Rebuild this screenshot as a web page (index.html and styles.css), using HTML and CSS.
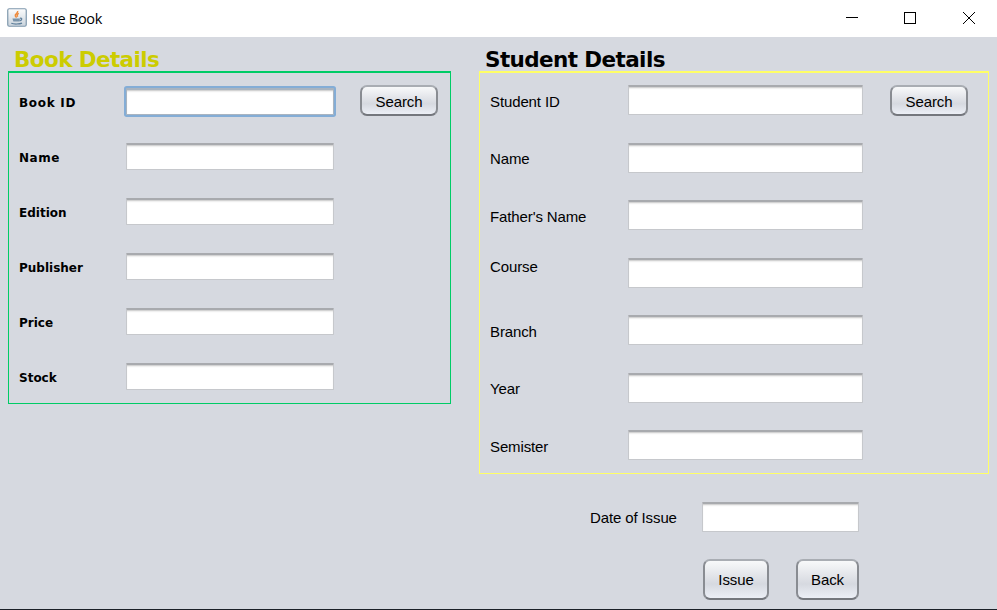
FILE: index.html
```html
<!DOCTYPE html>
<html lang="en">

<head>
    <meta charset="UTF-8">
    <meta name="viewport" content="width=device-width, initial-scale=1.0">
    <title>Issue Book</title>
    <link rel="stylesheet" href="styles.css">
</head>

<body>
    <header class="title-bar">
        <svg class="java-icon" width="20" height="20" viewBox="0 0 20 20">
            <defs>
                <linearGradient id="tile" x1="0" y1="0" x2="0" y2="1">
                    <stop offset="0" stop-color="#fdfdfd" />
                    <stop offset="1" stop-color="#c9d3dc" />
                </linearGradient>
            </defs>
            <rect x="0.75" y="0.75" width="18.5" height="17.5" rx="1.5" fill="url(#tile)" stroke="#7f98ad" stroke-width="1.2" />
            <path d="M10.600 3c1 2-3.400 3-2.200 5l1.200 1.600M11.800 5.400c-2 1-2 1.800-1 3.200" fill="none" stroke="#ee8a3c" stroke-width="1.500" />
            <path d="M5.500 10.500h7.500l-.6 3H6.300z" fill="#7893aa" />
            <path d="M13 10.300c2.500-.6 2.200 1.800-.4 2.600M4.300 15.300c2 1 8.500 1 10.700-.2" fill="none" stroke="#5e7f9b" stroke-width="1.200" />
        </svg>
        <span class="title">Issue Book</span>
        <svg class="window-buttons" width="130" height="14" viewBox="0 0 130 14" shape-rendering="crispEdges">
            <path d="M0 6.500h12" stroke="#000" />
            <rect x="58.500" y="1.500" width="11" height="11" fill="none" stroke="#000" />
            <path d="M117 1l12 12M129 1l-12 12" stroke="#000" shape-rendering="auto" />
        </svg>
    </header>

    <main class="content">
        <section class="book-section">
            <h2 class="section-title book-title">Book Details</h2>
            <form class="panel book-panel">
                <div class="row">
                    <label class="wide" for="bookId">Book ID</label>
                    <input class="focused" type="text" id="bookId">
                    <button type="button">Search</button>
                </div>
                <div class="row">
                    <label class="spaced" for="bookName">Name</label>
                    <input type="text" id="bookName">
                </div>
                <div class="row">
                    <label for="edition">Edition</label>
                    <input type="text" id="edition">
                </div>
                <div class="row">
                    <label for="publisher">Publisher</label>
                    <input type="text" id="publisher">
                </div>
                <div class="row">
                    <label for="price">Price</label>
                    <input type="text" id="price">
                </div>
                <div class="row">
                    <label for="stock">Stock</label>
                    <input type="text" id="stock">
                </div>
            </form>
        </section>

        <section class="student-section">
            <h2 class="section-title">Student Details</h2>
            <form class="panel student-panel">
                <div class="row">
                    <label for="studentId">Student ID</label>
                    <input type="text" id="studentId">
                    <button type="button">Search</button>
                </div>
                <div class="row">
                    <label for="studentName">Name</label>
                    <input type="text" id="studentName">
                </div>
                <div class="row">
                    <label for="fatherName">Father's Name</label>
                    <input type="text" id="fatherName">
                </div>
                <div class="row">
                    <label class="raised" for="course">Course</label>
                    <input type="text" id="course">
                </div>
                <div class="row">
                    <label for="branch">Branch</label>
                    <input type="text" id="branch">
                </div>
                <div class="row">
                    <label for="year">Year</label>
                    <input type="text" id="year">
                </div>
                <div class="row">
                    <label for="semister">Semister</label>
                    <input type="text" id="semister">
                </div>
            </form>
            <div class="issue-date">
                <label for="issueDate">Date of Issue</label>
                <input type="text" id="issueDate">
            </div>
            <div class="actions">
                <button class="btn-issue" type="button">Issue</button>
                <button class="btn-back" type="button">Back</button>
            </div>
        </section>
    </main>
</body>

</html>
```
FILE: styles.css
```css
* {
    box-sizing: border-box;
}

body {
    margin: 0;
    height: 610px;
    overflow: hidden;
    display: flex;
    flex-direction: column;
    background-color: #d6d9e0;
    border-bottom: 1px solid #1b2028;
    color: #000;
    font-family: "Liberation Sans", Arial, sans-serif;
    font-size: 15px;
}

.title-bar {
    display: flex;
    align-items: center;
    flex: none;
    height: 37px;
    padding: 0 21px 0 7px;
    background-color: #fff;
}

.java-icon {
    margin-top: -1px;
}

.title {
    margin-left: 5px;
    font-family: "Open Sans", "Noto Sans", sans-serif;
    font-size: 14.5px;
    letter-spacing: -0.3px;
}

.window-buttons {
    margin-left: auto;
    margin-top: -1px;
}

.content {
    display: flex;
    gap: 28px;
    padding: 8px 8px 0;
}

.book-section {
    width: 443px;
}

.student-section {
    width: 510px;
}

.section-title {
    margin: 0;
    padding-left: 6px;
    height: 26px;
    line-height: 29px;
    font-family: "DejaVu Sans", Verdana, sans-serif;
    font-size: 21.5px;
    font-weight: bold;
    letter-spacing: -0.6px;
}

.book-title {
    color: #cccc00;
}

.panel {
    border: 1px solid;
    border-top-width: 2px;
}

.row {
    display: flex;
    align-items: center;
}

.book-panel {
    height: 333px;
    padding: 1px 0 0 10px;
    border-color: #00cc66;
}

.book-panel .row {
    height: 55px;
}

.book-panel label {
    width: 107px;
    padding-top: 2px;
    font-family: "DejaVu Sans", Verdana, sans-serif;
    font-size: 12px;
    font-weight: bold;
}

.book-panel label.wide {
    letter-spacing: 0.7px;
}

.book-panel label.spaced {
    letter-spacing: 0.5px;
}

.book-panel input {
    width: 208px;
    height: 27px;
}

.student-panel {
    height: 403px;
    padding: 0 0 0 10px;
    border-color: #ffff66;
}

.student-panel .row {
    height: 57.5px;
    position: relative;
    top: -1.5px;
}

.student-panel label,
.issue-date label {
    letter-spacing: -0.12px;
}

.student-panel label {
    width: 138px;
    padding-top: 2px;
}

.student-panel label.raised {
    padding-bottom: 15px;
}

.student-panel input {
    width: 235px;
    height: 30px;
}

input {
    padding: 0 4px;
    border: 1px solid #c6c8cc;
    border-top: 2px solid #a8aaae;
    border-radius: 1px;
    background-color: #fff;
    box-shadow: inset 0 2px 2px -1px #c4c4c4;
    font: inherit;
    outline: none;
}

input.focused {
    border-color: #a9b4c0;
    box-shadow: 0 0 0 2px #84add6, inset 0 2px 2px -1px #c4c4c4;
}

button {
    padding: 0;
    border: 2px solid #898c92;
    border-top-color: #a9adb3;
    border-bottom-color: #74777d;
    border-radius: 7px;
    background: linear-gradient(#f8f9fa 0%, #e2e4e9 40%, #d6d9e0 62%, #eceff6 100%);
    color: #000;
    font-family: inherit;
    font-size: 15px;
    letter-spacing: -0.1px;
}

.row button {
    width: 78px;
    height: 31px;
    margin-left: 26px;
    padding-top: 1px;
}

.book-panel button {
    margin-top: -2px;
}

.student-panel .row button {
    margin-top: 1px;
    margin-left: 27px;
}

.issue-date {
    display: flex;
    align-items: center;
    margin: 28px 0 0 111px;
}

.issue-date label {
    width: 112px;
}

.issue-date input {
    width: 157px;
    height: 30px;
}

.actions {
    display: flex;
    gap: 27px;
    margin: 27px 0 0 224px;
}

.actions button {
    height: 41px;
}

.btn-issue {
    width: 66px;
}

.btn-back {
    width: 63px;
}
```
